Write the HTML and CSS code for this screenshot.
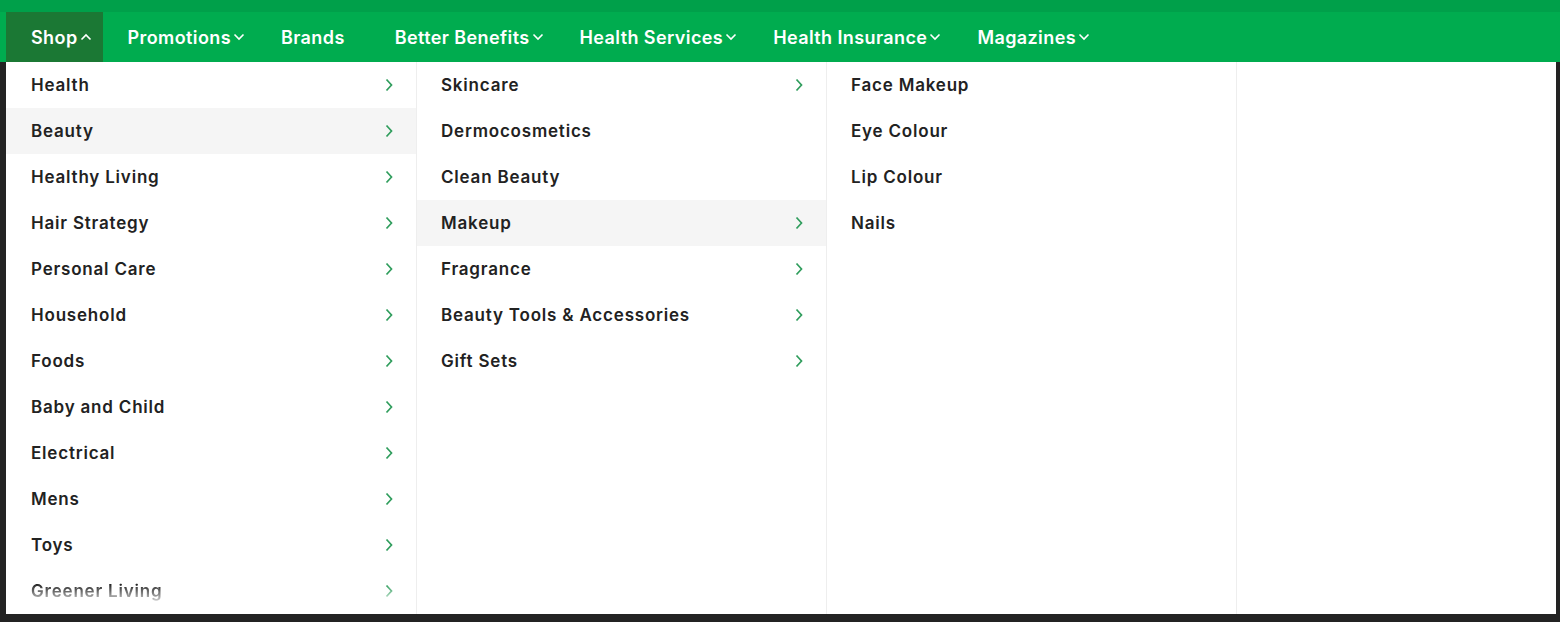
FILE: index.html
```html
<!DOCTYPE html>
<html lang="en">
<head>
<meta charset="utf-8">
<title>Shop menu</title>
<link rel="stylesheet" href="styles.css">
</head>
<body>
<header class="site-header">
  <div class="top-strip"></div>
  <nav class="main-nav">
    <a class="nav-item active">Shop<svg class="nav-chev" viewBox="0 0 12 8"><path d="M1.5 6.5 6 2l4.5 4.5"/></svg></a>
    <a class="nav-item">Promotions<svg class="nav-chev" viewBox="0 0 12 8"><path d="M1.5 1.5 6 6l4.5-4.5"/></svg></a>
    <a class="nav-item">Brands</a>
    <a class="nav-item">Better Benefits<svg class="nav-chev" viewBox="0 0 12 8"><path d="M1.5 1.5 6 6l4.5-4.5"/></svg></a>
    <a class="nav-item">Health Services<svg class="nav-chev" viewBox="0 0 12 8"><path d="M1.5 1.5 6 6l4.5-4.5"/></svg></a>
    <a class="nav-item">Health Insurance<svg class="nav-chev" viewBox="0 0 12 8"><path d="M1.5 1.5 6 6l4.5-4.5"/></svg></a>
    <a class="nav-item">Magazines<svg class="nav-chev" viewBox="0 0 12 8"><path d="M1.5 1.5 6 6l4.5-4.5"/></svg></a>
  </nav>
</header>
<div class="mega">
  <ul class="col col-1">
    <li class="row"><span>Health</span><svg class="chev" viewBox="0 0 8 14"><path d="M1.5 1.5 6.5 7l-5 5.5"/></svg></li>
    <li class="row hover"><span>Beauty</span><svg class="chev" viewBox="0 0 8 14"><path d="M1.5 1.5 6.5 7l-5 5.5"/></svg></li>
    <li class="row"><span>Healthy Living</span><svg class="chev" viewBox="0 0 8 14"><path d="M1.5 1.5 6.5 7l-5 5.5"/></svg></li>
    <li class="row"><span>Hair Strategy</span><svg class="chev" viewBox="0 0 8 14"><path d="M1.5 1.5 6.5 7l-5 5.5"/></svg></li>
    <li class="row"><span>Personal Care</span><svg class="chev" viewBox="0 0 8 14"><path d="M1.5 1.5 6.5 7l-5 5.5"/></svg></li>
    <li class="row"><span>Household</span><svg class="chev" viewBox="0 0 8 14"><path d="M1.5 1.5 6.5 7l-5 5.5"/></svg></li>
    <li class="row"><span>Foods</span><svg class="chev" viewBox="0 0 8 14"><path d="M1.5 1.5 6.5 7l-5 5.5"/></svg></li>
    <li class="row"><span>Baby and Child</span><svg class="chev" viewBox="0 0 8 14"><path d="M1.5 1.5 6.5 7l-5 5.5"/></svg></li>
    <li class="row"><span>Electrical</span><svg class="chev" viewBox="0 0 8 14"><path d="M1.5 1.5 6.5 7l-5 5.5"/></svg></li>
    <li class="row"><span>Mens</span><svg class="chev" viewBox="0 0 8 14"><path d="M1.5 1.5 6.5 7l-5 5.5"/></svg></li>
    <li class="row"><span>Toys</span><svg class="chev" viewBox="0 0 8 14"><path d="M1.5 1.5 6.5 7l-5 5.5"/></svg></li>
    <li class="row fade"><span>Greener Living</span><svg class="chev" viewBox="0 0 8 14"><path d="M1.5 1.5 6.5 7l-5 5.5"/></svg></li>
  </ul>
  <ul class="col col-2">
    <li class="row"><span>Skincare</span><svg class="chev" viewBox="0 0 8 14"><path d="M1.5 1.5 6.5 7l-5 5.5"/></svg></li>
    <li class="row"><span>Dermocosmetics</span></li>
    <li class="row"><span>Clean Beauty</span></li>
    <li class="row hover"><span>Makeup</span><svg class="chev" viewBox="0 0 8 14"><path d="M1.5 1.5 6.5 7l-5 5.5"/></svg></li>
    <li class="row"><span>Fragrance</span><svg class="chev" viewBox="0 0 8 14"><path d="M1.5 1.5 6.5 7l-5 5.5"/></svg></li>
    <li class="row"><span>Beauty Tools &amp; Accessories</span><svg class="chev" viewBox="0 0 8 14"><path d="M1.5 1.5 6.5 7l-5 5.5"/></svg></li>
    <li class="row"><span>Gift Sets</span><svg class="chev" viewBox="0 0 8 14"><path d="M1.5 1.5 6.5 7l-5 5.5"/></svg></li>
  </ul>
  <ul class="col col-3">
    <li class="row"><span>Face Makeup</span></li>
    <li class="row"><span>Eye Colour</span></li>
    <li class="row"><span>Lip Colour</span></li>
    <li class="row"><span>Nails</span></li>
  </ul>
  <div class="col col-4"></div>
</div>
</body>
</html>
```

FILE: styles.css
```css
* { box-sizing: border-box; }
html, body { margin: 0; padding: 0; }
body {
  background: #232323;
  font-family: Inter, "Open Sans", "Liberation Sans", sans-serif;
  height: 622px;
  overflow: hidden;
}
.top-strip { height: 12px; background: #00a04a; }
.main-nav {
  height: 50px;
  background: #00ac4f;
  display: flex;
  align-items: stretch;
  padding-left: 6px;
}
.nav-item {
  display: flex;
  align-items: center;
  padding: 0 25px;
  color: #fff;
  font-size: 18px;
  font-weight: 600;
  letter-spacing: 0.4px;
  text-decoration: none;
  white-space: nowrap;
}
.nav-item.active { background: #1b7834; }
.nav-chev {
  width: 12px;
  height: 8px;
  margin-left: 2px;
  margin-right: -14px;
  fill: none;
  stroke: #fff;
  stroke-width: 1.6;
}
.mega {
  margin: 0 4px 0 6px;
  height: 552px;
  background: #fff;
  display: grid;
  grid-template-columns: 411px 410px 410px 1fr;
}
.col {
  list-style: none;
  margin: 0;
  padding: 0;
  border-right: 1px solid #eeeeee;
  overflow: hidden;
}
.col-2, .col-3 { padding-left: 0; }
.col-4 { border-right: none; }
.row {
  height: 46px;
  display: flex;
  align-items: center;
  justify-content: space-between;
  padding: 0 23px 0 25px;
  font-size: 17px;
  font-weight: 600;
  letter-spacing: 0.8px;
  color: #222;
}
.col-2 .row, .col-3 .row { padding-left: 24px; }
.row.hover { background: #f5f5f5; }
.row.fade {
  -webkit-mask-image: linear-gradient(to bottom, #000 35%, rgba(0,0,0,0.15) 75%, rgba(0,0,0,0) 100%);
  mask-image: linear-gradient(to bottom, #000 35%, rgba(0,0,0,0.15) 75%, rgba(0,0,0,0) 100%);
}
.chev {
  width: 8px;
  height: 14px;
  fill: none;
  stroke: #2f9d5c;
  stroke-width: 1.7;
}
```
